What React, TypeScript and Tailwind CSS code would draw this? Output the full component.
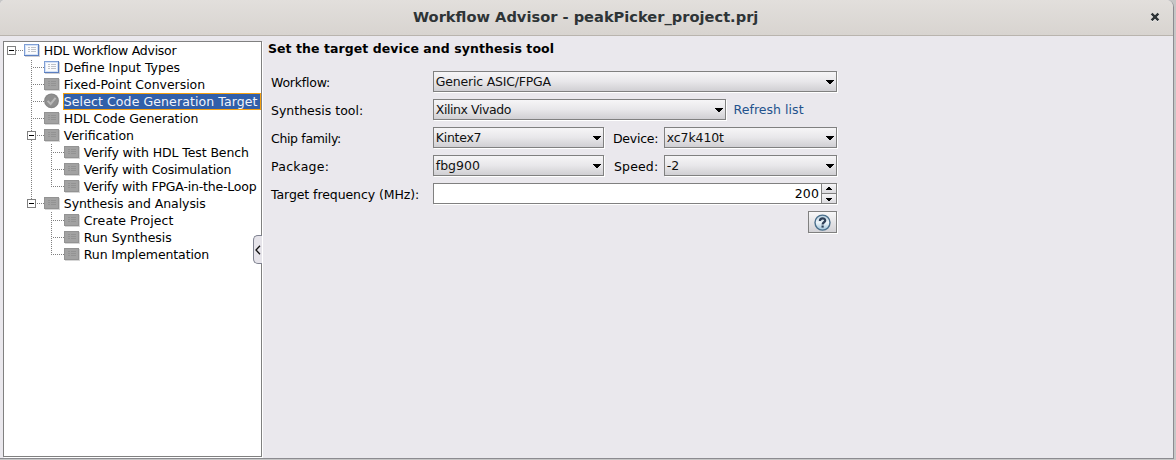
type Icon = "open" | "done" | "pending";
type TreeNode = { label: string; level: number; icon: Icon; expander?: boolean; selected?: boolean; tracking: string };

const nodes: TreeNode[] = [
  { label: "HDL Workflow Advisor", level: 0, icon: "open", expander: true, tracking: "tracking-[-0.26px]" },
  { label: "Define Input Types", level: 1, icon: "open", tracking: "tracking-[0px]" },
  { label: "Fixed-Point Conversion", level: 1, icon: "pending", tracking: "tracking-[-0.03px]" },
  { label: "Select Code Generation Target", level: 1, icon: "done", selected: true, tracking: "tracking-[0.1px]" },
  { label: "HDL Code Generation", level: 1, icon: "pending", tracking: "tracking-[-0.06px]" },
  { label: "Verification", level: 1, icon: "pending", expander: true, tracking: "tracking-[0px]" },
  { label: "Verify with HDL Test Bench", level: 2, icon: "pending", tracking: "tracking-[-0.09px]" },
  { label: "Verify with Cosimulation", level: 2, icon: "pending", tracking: "tracking-[-0.17px]" },
  { label: "Verify with FPGA-in-the-Loop", level: 2, icon: "pending", tracking: "tracking-[-0.19px]" },
  { label: "Synthesis and Analysis", level: 1, icon: "pending", expander: true, tracking: "tracking-[-0.06px]" },
  { label: "Create Project", level: 2, icon: "pending", tracking: "tracking-[0.1px]" },
  { label: "Run Synthesis", level: 2, icon: "pending", tracking: "tracking-[-0.02px]" },
  { label: "Run Implementation", level: 2, icon: "pending", tracking: "tracking-[-0.1px]" },
];

function NodeIcon({ kind }: { kind: Icon }) {
  if (kind === "done") {
    return (
      <svg width="16" height="16" viewBox="0 0 16 16" className="shrink-0">
        <circle cx="7.5" cy="7.8" r="7.4" fill="#868686" />
        <circle cx="7.5" cy="7.8" r="6.2" fill="#8f8f8f" />
        <path d="M3.6 7.9 L6.6 10.9 L11.6 4.9" fill="none" stroke="#b9b9b9" strokeWidth="2" />
      </svg>
    );
  }
  const open = kind === "open";
  return (
    <svg width="16" height="16" viewBox="0 0 16 16" className="shrink-0" shapeRendering="crispEdges">
      <rect x="1" y="3" width="15" height="12" fill={open ? "#cfcfd3" : "#d6d6d6"} />
      <rect x="0" y="2" width="15" height="12" fill={open ? "#7f9fd6" : "#939393"} />
      {open && <path d="M14 2H15V14H0V13H14z" fill="#5b7fc0" />}
      <rect x="1" y="3" width="13" height="10" fill={open ? "#d5e2f6" : "#a2a2a2"} />
      {open && <rect x="2" y="4" width="11" height="8" fill="#fafbfd" />}
      {[5, 7, 9].map((y) => (
        <g key={y} fill={open ? "#c0c3c9" : "#939393"}>
          <rect x="4" y={y} width="2" height="1" />
          <rect x="7" y={y} width="5" height="1" />
        </g>
      ))}
    </svg>
  );
}

function Dots({ d }: { d: string }) {
  return <path d={d} stroke="#808080" strokeWidth="1" strokeDasharray="1 1" fill="none" />;
}

function TreeLines() {
  return (
    <svg width="60" height="222" viewBox="0 0 60 222" className="absolute top-0 left-0" shapeRendering="crispEdges">
      <Dots d="M12 8.5H20" />
      <Dots d="M27.5 18V162" />
      {[25, 42, 59, 76, 93, 161].map((y) => <Dots key={y} d={`M29 ${y + 0.5}H40`} />)}
      <Dots d="M47.5 102V145" />
      <Dots d="M47.5 170V213" />
      {[110, 127, 144, 178, 195, 212].map((y) => <Dots key={y} d={`M49 ${y + 0.5}H60`} />)}
      {[[3, 4], [23, 89], [23, 157]].map(([x, y]) => (
        <g key={`${x}-${y}`}>
          <rect x={x + 0.5} y={y + 0.5} width="8" height="8" fill="#fff" stroke="#808080" />
          <rect x={x + 2} y={y + 4} width="5" height="1" fill="#000" />
        </g>
      ))}
    </svg>
  );
}

const indents = ["pl-[20px]", "pl-[40px]", "pl-[60px]"];

function TreeRow({ node }: { node: TreeNode }) {
  return (
    <div className={`flex h-[17px] items-start ${indents[node.level]}`}>
      <NodeIcon kind={node.icon} />
      <div
        className={`ml-[3px] h-[17px] leading-[17px] ${
          node.selected ? "w-[198px] bg-[#315fa9] text-[#f0f4fb] outline-1 -outline-offset-1 outline-[#f5a111]" : "text-black"
        }`}
      >
        <span className={`ml-[0.8px] whitespace-nowrap ${node.tracking}`}>{node.label}</span>
      </div>
    </div>
  );
}

function Combo({ value, width, tracking }: { value: string; width: string; tracking: string }) {
  return (
    <div
      className={`flex h-[21px] shrink-0 items-center justify-between border border-[#808080] bg-linear-to-b from-[#f6f5f7] via-[#e8e7ea] to-[#d0cfd3] pr-px pl-[1.8px] shadow-[1px_1px_0_#fff] ${width}`}
    >
      <span className={`leading-[19px] whitespace-nowrap text-[#111] ${tracking}`}>{value}</span>
      <svg width="9" height="4" viewBox="0 0 9 4" className="mt-px" shapeRendering="crispEdges">
        <path d="M0 0H8V1H0zM1 1H7V2H1zM2 2H6V3H2zM3 3H5V4H3z" fill="#000" />
      </svg>
    </div>
  );
}

function Label({ text, width, tracking }: { text: string; width: string; tracking: string }) {
  return <span className={`mt-px shrink-0 leading-[21px] whitespace-nowrap ${width} ${tracking}`}>{text}</span>;
}

function Spinner() {
  return (
    <div className="flex h-[21px] w-[404px] border border-[#808080] bg-white shadow-[1px_1px_0_#fff]">
      <span className="grow pr-[2px] text-right leading-[19px] tracking-[0.1px]">200</span>
      <div className="flex w-[15px] flex-col border-l border-[#808080]">
        <div className="flex h-[10px] items-center justify-center border-b border-[#808080] bg-linear-to-b from-[#f6f5f7] to-[#dcdbdf]">
          <svg width="6" height="3" viewBox="0 0 6 3" shapeRendering="crispEdges">
            <path d="M2 0H4V1H2zM1 1H5V2H1zM0 2H6V3H0z" fill="#000" />
          </svg>
        </div>
        <div className="flex h-[9px] items-center justify-center bg-linear-to-b from-[#f6f5f7] to-[#dcdbdf] pt-px">
          <svg width="6" height="3" viewBox="0 0 6 3" shapeRendering="crispEdges">
            <path d="M2 2H4V3H2zM1 1H5V2H1zM0 0H6V1H0z" fill="#000" />
          </svg>
        </div>
      </div>
    </div>
  );
}

function HelpButton() {
  return (
    <button className="flex h-[22px] w-[29px] items-center justify-center border border-[#808080] bg-linear-to-b from-[#f8f8f9] to-[#d3d2d6] pl-px shadow-[1px_1px_0_#fff]">
      <svg width="17" height="17" viewBox="0 0 17 17">
        <defs>
          <linearGradient id="help" x1="0" y1="0" x2="0" y2="1">
            <stop offset="0" stopColor="#b4cfe0" />
            <stop offset="0.5" stopColor="#eef5f9" />
            <stop offset="1" stopColor="#9dc3da" />
          </linearGradient>
        </defs>
        <circle cx="8.5" cy="8.6" r="7.5" fill="url(#help)" stroke="#4a6f8c" strokeWidth="1.4" />
        <path d="M5.9 6.9 C5.9 3.5 11.3 3.6 11.2 6.6 C11.1 8.3 8.6 8.3 8.6 10.4" fill="none" stroke="#2f4058" strokeWidth="2.2" />
        <rect x="7.5" y="11.5" width="2.2" height="2.1" fill="#2f4058" />
      </svg>
    </button>
  );
}

export default function App() {
  return (
    <div className="h-[460px] w-[1176px] overflow-hidden bg-[#c6c6c6] font-['DejaVu_Sans',sans-serif] text-[12.5px] text-black">
      <div className="flex h-[459px] w-[1174px] flex-col overflow-hidden rounded-tl-[5px] rounded-tr-[7px] border-r border-b border-[#8c8b90] bg-[#eae8ed]">
        <header className="flex h-[36px] shrink-0 items-start border-b border-[#b9b4ae] bg-linear-to-b from-[#e2dfdc] to-[#d8d4d0] pl-[413px]">
          <h1 className="mt-[8px] w-[737px] text-[14.63px] leading-[17px] font-bold whitespace-nowrap text-[#2e3436]">
            Workflow Advisor - peakPicker_project.prj
          </h1>
          <svg width="10" height="11" viewBox="0 0 10 11" className="mt-[12px]">
            <path d="M1.6 2.5 L8.4 9.3 M8.4 2.5 L1.6 9.3" stroke="#fff" strokeWidth="2.2" />
            <path d="M1.6 1.6 L8.4 8.4 M8.4 1.6 L1.6 8.4" stroke="#2e3436" strokeWidth="2.4" />
          </svg>
        </header>
        <div className="flex grow items-start">
          <aside className="relative mt-[5px] ml-[3px] h-[416px] w-[259px] shrink-0 border border-[#808080] bg-white shadow-[1px_1px_0_#fff]">
            <TreeLines />
            {nodes.map((n) => <TreeRow key={n.label} node={n} />)}
            <button className="absolute top-[193px] right-[-1px] flex h-[29px] w-[9px] items-center justify-center rounded-l-[5px] border border-r-0 border-[#7f8290] bg-[#e6e4ea]">
              <svg width="6" height="10" viewBox="0 0 6 10">
                <path d="M5 0.8 L1 5 L5 9.2" fill="none" stroke="#111" strokeWidth="1.3" />
              </svg>
            </button>
          </aside>
          <main className="pl-[5.9px]">
            <h2 className="mt-[4px] leading-[17px] font-bold tracking-[0.07px] whitespace-nowrap">
              Set the target device and synthesis tool
            </h2>
            <div className="mt-[14px] ml-[3.1px] flex flex-col gap-[7px]">
              <div className="flex h-[21px] items-start">
                <Label text="Workflow:" width="w-[162px]" tracking="tracking-[-0.2px]" />
                <Combo value="Generic ASIC/FPGA" width="w-[404px]" tracking="tracking-[-0.2px]" />
              </div>
              <div className="flex h-[21px] items-start">
                <Label text="Synthesis tool:" width="w-[162px]" tracking="tracking-[0px]" />
                <Combo value="Xilinx Vivado" width="w-[293px]" tracking="tracking-[-0.42px]" />
                <a className="ml-[7.6px] leading-[21px] tracking-[0.04px] text-[#23528c]">Refresh list</a>
              </div>
              <div className="flex h-[21px] items-start">
                <Label text="Chip family:" width="w-[162px]" tracking="tracking-[-0.33px]" />
                <Combo value="Kintex7" width="w-[171px]" tracking="tracking-[-0.26px]" />
                <Label text="Device:" width="ml-[9px] w-[51px]" tracking="tracking-[-0.24px]" />
                <Combo value="xc7k410t" width="w-[173px]" tracking="tracking-[-0.12px]" />
              </div>
              <div className="flex h-[21px] items-start">
                <Label text="Package:" width="w-[162px]" tracking="tracking-[0.28px]" />
                <Combo value="fbg900" width="w-[171px]" tracking="tracking-[0px]" />
                <Label text="Speed:" width="ml-[10px] w-[50px]" tracking="tracking-[0.15px]" />
                <Combo value="-2" width="w-[173px]" tracking="tracking-[0px]" />
              </div>
              <div className="flex h-[21px] items-start">
                <Label text="Target frequency (MHz):" width="w-[162px]" tracking="tracking-[-0.08px]" />
                <Spinner />
              </div>
              <div className="flex w-[566px] justify-end">
                <HelpButton />
              </div>
            </div>
          </main>
        </div>
      </div>
    </div>
  );
}
